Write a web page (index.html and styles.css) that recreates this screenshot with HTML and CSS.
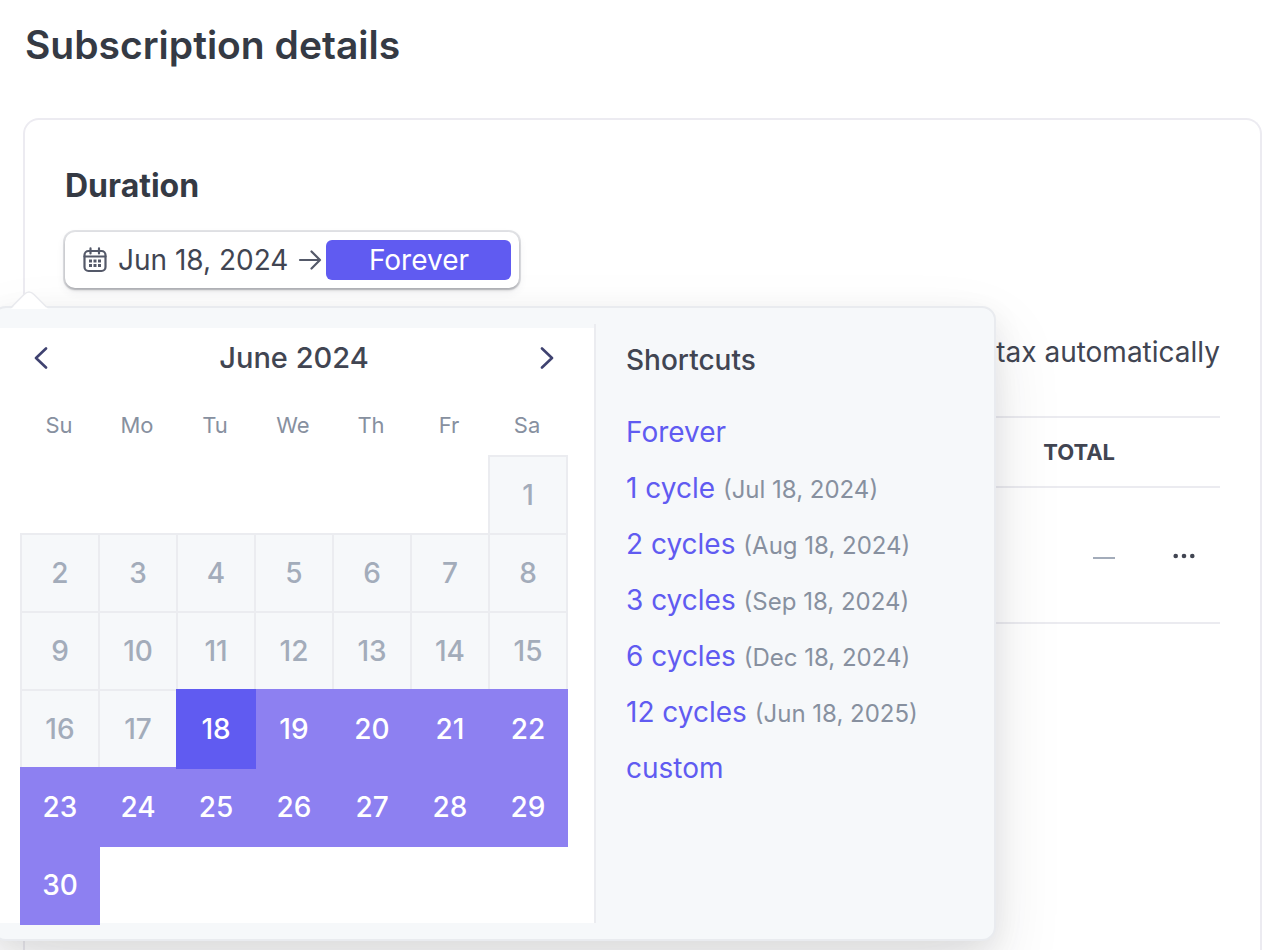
FILE: index.html
```html
<!DOCTYPE html>
<html lang="en">
<head>
<meta charset="utf-8">
<title>Subscription details</title>
<link rel="stylesheet" href="styles.css">
</head>
<body>
<main class="page">
  <h1 class="page-title">Subscription details</h1>
  <section class="card">
    <h2 class="card-title">Duration</h2>
    <div class="duration">
      <div class="field">
        <button type="button" class="start-date">
          <svg class="icon-calendar" width="24" height="26" viewBox="0 0 24 26" fill="none" stroke="currentColor" stroke-width="2.2" stroke-linecap="round">
            <rect x="1.5" y="4" width="21" height="20" rx="4"/>
            <path d="M1.5 9.500h21M7.500 1.400v5M16 1.400v5"/>
            <path stroke="none" fill="currentColor" d="M6 12.500h3v3H6zM10.500 12.500h3v3h-3zM15 12.500h3v3h-3zM6 17h3v3H6zM10.500 17h3v3h-3zM15 17h3v3h-3z"/>
          </svg>
          <span>Jun 18, 2024</span>
        </button>
        <svg class="icon-arrow" width="24" height="22" viewBox="0 0 24 22" fill="none" stroke="currentColor" stroke-width="2.2" stroke-linecap="round" stroke-linejoin="round"><path d="M2 11h20M13.500 2.500L22 11l-8.500 8.500"/></svg>
        <button type="button" class="end-date">Forever</button>
      </div>

      <div class="popover" role="dialog" aria-label="Choose duration">
        <svg class="pointer" width="40" height="18" viewBox="0 0 40 18"><path d="M2 18L15 4Q20-1 25 4L39 18z" fill="#fff"/><path d="M2.500 16L15 3.500Q20-1.500 25 3.500L37.500 16" fill="none" stroke="#e9eaee" stroke-width="1.500"/></svg>
        <div class="calendar">
          <div class="calendar-head">
            <button type="button" class="nav" aria-label="Previous month"><svg width="14" height="22" viewBox="0 0 14 22"><path d="M12 1.500L2 11l10 9.500"/></svg></button>
            <span class="month">June 2024</span>
            <button type="button" class="nav" aria-label="Next month"><svg width="14" height="22" viewBox="0 0 14 22"><path d="M2 1.500L12 11 2 20.500"/></svg></button>
          </div>
          <table class="days">
            <thead>
              <tr><th>Su</th><th>Mo</th><th>Tu</th><th>We</th><th>Th</th><th>Fr</th><th>Sa</th></tr>
            </thead>
            <tbody>
              <tr><td colspan="6"></td><td><button class="day" disabled>1</button></td></tr>
              <tr><td><button class="day" disabled>2</button></td><td><button class="day" disabled>3</button></td><td><button class="day" disabled>4</button></td><td><button class="day" disabled>5</button></td><td><button class="day" disabled>6</button></td><td><button class="day" disabled>7</button></td><td><button class="day" disabled>8</button></td></tr>
              <tr><td><button class="day" disabled>9</button></td><td><button class="day" disabled>10</button></td><td><button class="day" disabled>11</button></td><td><button class="day" disabled>12</button></td><td><button class="day" disabled>13</button></td><td><button class="day" disabled>14</button></td><td><button class="day" disabled>15</button></td></tr>
              <tr><td><button class="day" disabled>16</button></td><td><button class="day" disabled>17</button></td><td><button class="day start">18</button></td><td><button class="day range">19</button></td><td><button class="day range">20</button></td><td><button class="day range">21</button></td><td><button class="day range">22</button></td></tr>
              <tr><td><button class="day range">23</button></td><td><button class="day range">24</button></td><td><button class="day range">25</button></td><td><button class="day range">26</button></td><td><button class="day range">27</button></td><td><button class="day range">28</button></td><td><button class="day range">29</button></td></tr>
              <tr><td><button class="day range">30</button></td><td colspan="6"></td></tr>
            </tbody>
          </table>
        </div>
        <div class="shortcuts">
          <h3 class="shortcuts-title">Shortcuts</h3>
          <ul class="shortcut-list">
            <li><a href="#">Forever</a></li>
            <li><a href="#">1 cycle</a> <small>(Jul 18, 2024)</small></li>
            <li><a href="#">2 cycles</a> <small>(Aug 18, 2024)</small></li>
            <li><a href="#">3 cycles</a> <small>(Sep 18, 2024)</small></li>
            <li><a href="#">6 cycles</a> <small>(Dec 18, 2024)</small></li>
            <li><a href="#">12 cycles</a> <small>(Jun 18, 2025)</small></li>
            <li><a href="#">custom</a></li>
          </ul>
        </div>
      </div>
    </div>

    <p class="tax">tax automatically</p>
    <table class="pricing">
      <thead><tr><th class="total">Total</th><th class="actions"></th></tr></thead>
      <tbody>
        <tr>
          <td class="total"><span class="dash" role="img" aria-label="No total"></span></td>
          <td class="actions"><button type="button" class="more" aria-label="More options"><svg width="22" height="6" viewBox="0 0 22 6" fill="currentColor"><circle cx="2.700" cy="3" r="2.300"/><circle cx="11" cy="3" r="2.300"/><circle cx="19.300" cy="3" r="2.300"/></svg></button></td>
        </tr>
      </tbody>
    </table>
  </section>
</main>
</body>
</html>
```
FILE: styles.css
```css
* { box-sizing: border-box; }

body {
  margin: 0;
  overflow: hidden;
  background: #fff;
  color: #414552;
  font: 400 28px/40px Inter, "Liberation Sans", sans-serif;
}

button {
  padding: 0;
  border: 0;
  background: none;
  color: inherit;
  font: inherit;
  cursor: pointer;
}

svg { display: block; }

.page {
  display: flex;
  flex-direction: column;
  min-height: 100vh;
  padding: 20px 12px 0 23px;
}

.page-title {
  margin: 0 2px 48px;
  color: #353a44;
  font-size: 39px;
  font-weight: 600;
  line-height: 50px;
}

.card {
  flex: 1;
  padding: 46px 40px 0;
  border: 2px solid #ecebf1;
  border-bottom: 0;
  border-radius: 16px 16px 0 0;
}

.card-title {
  margin: 0 0 26px;
  color: #353a44;
  font-size: 32px;
  font-weight: 700;
  line-height: 40px;
}

.duration {
  position: relative;
  width: fit-content;
}

.field {
  position: relative;
  z-index: 2;
  display: flex;
  align-items: center;
  padding: 8px;
  border-radius: 10px;
  background: #fff;
  box-shadow: 0 0 0 2px rgba(60, 66, 87, .14), 0 2px 3px rgba(0, 0, 0, .22), 0 4px 10px rgba(60, 66, 87, .08);
}

.start-date {
  display: flex;
  align-items: center;
  gap: 11px;
  padding: 0 10px;
}

.icon-calendar,
.icon-arrow { color: #545969; }

.end-date {
  width: 185px;
  margin-left: 4px;
  border-radius: 6px;
  background: #605bf1;
  color: #fff;
}

.popover {
  position: absolute;
  z-index: 1;
  top: 74px;
  left: -73px;
  display: flex;
  width: 1004px;
  padding: 16px 0;
  border: 2px solid #e9ebef;
  border-radius: 14px;
  background: #f6f8fa;
  box-shadow: 0 30px 70px rgba(40, 40, 50, .1), 0 10px 30px rgba(0, 0, 0, .08);
}

.pointer {
  position: absolute;
  top: -17px;
  left: 15px;
}

.calendar {
  width: 600px;
  height: 595px;
  margin-top: 4px;
  padding: 10px 24px 0 26px;
  background: #fff;
}

.calendar-head {
  display: flex;
  align-items: center;
  justify-content: space-between;
  padding: 0 16px 0 14px;
  font-size: 29px;
  font-weight: 500;
}

.nav path {
  fill: none;
  stroke: #3f4270;
  stroke-width: 2.6;
  stroke-linecap: round;
  stroke-linejoin: round;
}

.days {
  width: 546px;
  border-spacing: 0;
  table-layout: fixed;
}

.days th {
  height: 77px;
  padding: 16px 0 0;
  color: #87909f;
  font-size: 22px;
  font-weight: 400;
  line-height: 40px;
}

.days td {
  height: 78px;
  padding: 0;
}

.day {
  position: relative;
  display: block;
  width: 80px;
  height: 80px;
  margin: 0 -2px -2px 0;
  border: 2px solid #ebecf0;
  background: #f6f8fa;
  font-weight: 500;
}

.day:disabled { color: #a3acba; }

.day.range {
  border-color: #8d80f1;
  background: #8d80f1;
  color: #fff;
}

.day.start {
  z-index: 1;
  border-color: #605bf1;
  background: #605bf1;
  color: #fff;
}

.shortcuts {
  flex: 1;
  padding: 16px 0 0 30px;
  border-left: 2px solid #ebecf0;
}

.shortcuts-title {
  margin: 0 0 32px;
  font-size: 28px;
  font-weight: 500;
}

.shortcut-list {
  display: flex;
  flex-direction: column;
  gap: 16px;
  margin: 0;
  padding: 0;
  list-style: none;
}

.shortcut-list a {
  color: #605bf1;
  text-decoration: none;
}

.shortcut-list small {
  color: #87909f;
  font-size: 24px;
  line-height: 32px;
}

.tax {
  margin: 44px 0;
  text-align: right;
}

.pricing {
  width: 100%;
  border-collapse: collapse;
}

.pricing tr { border: solid #ebebf0; border-width: 2px 0; }

.pricing th {
  height: 70px;
  padding: 0;
  font-size: 22px;
  font-weight: 700;
  text-transform: uppercase;
}

.pricing td {
  height: 136px;
  padding: 2px 0 0;
}

.pricing .total { text-align: right; }
.pricing .actions { width: 105px; }

.dash {
  display: inline-block;
  width: 22px;
  height: 2px;
  background: #a3acba;
  vertical-align: middle;
}

.more {
  display: block;
  margin-left: auto;
  padding: 16px 25px;
}
```
